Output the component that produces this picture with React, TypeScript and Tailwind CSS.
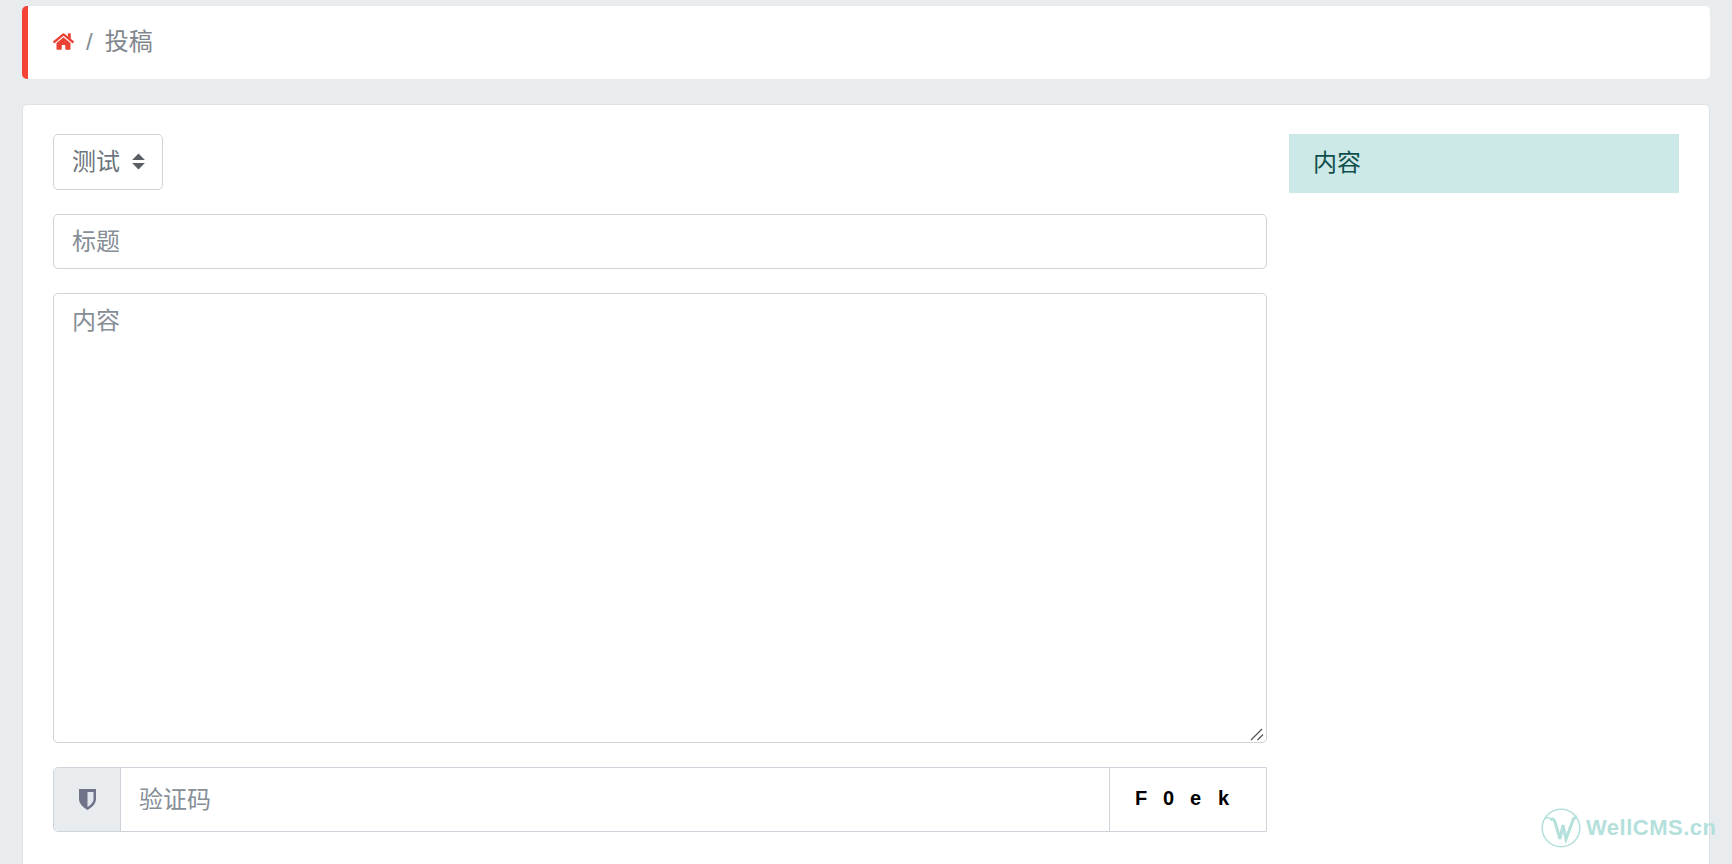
import React from "react";
import { FaHome } from "react-icons/fa";

const font = "font-['Liberation_Sans','Noto_Sans_CJK_SC',sans-serif]";

export default function App() {
  return (
    <div className={`${font} relative h-[864px] overflow-hidden bg-[#e9ecef] px-[22px] pt-[6px] text-[24px] leading-[36px] text-[#6c757d]`}>
      <nav className="flex h-[73px] items-center gap-[12px] rounded-[5px] border-l-[6px] border-[#f44336] bg-white pb-[2px] pl-[25px]">
        <FaHome className="h-[19px] w-[21px] text-[#ea4335]" />
        <span className="text-[#868e96]">/</span>
        <span className="text-[#7f868d]">投稿</span>
      </nav>

      <main className="mt-[25px] flex h-[800px] gap-[22px] rounded-[5px] border border-[#dee2e6] bg-white pl-[30px] pr-[30px] pt-[29px]">
        <form className="flex w-[1214px] flex-col gap-[24px]">
          <div className="relative w-[110px]">
            <select className="block h-[56px] w-full appearance-none rounded-[5px] border border-[#ced4da] bg-white pl-[18px] text-[#6c757d] outline-none">
              <option>测试</option>
            </select>
            <svg viewBox="0 0 12 16" className="pointer-events-none absolute left-[79px] top-[19px] h-[17px] w-[13px] fill-[#5a5f66]">
              <path d="M6 0.5 12 6.5H0Z" />
              <path d="M0 9.5H12L6 15.5Z" />
            </svg>
          </div>
          <input
            placeholder="标题"
            className="h-[55px] w-full rounded-[5px] border border-[#ced4da] bg-white px-[18px] outline-none placeholder:text-[#868e96]"
          />
          <div className="relative h-[450px] w-full">
            <textarea
              placeholder="内容"
              className="block h-full w-full resize-none rounded-[5px] border border-[#ced4da] bg-white px-[18px] py-[9px] outline-none placeholder:text-[#868e96]"
            />
            <svg viewBox="0 0 14 14" className="pointer-events-none absolute bottom-[2px] right-[3px] h-[14px] w-[14px] stroke-[#555] stroke-[1.3]">
              <path d="M1 13 12 2" />
              <path d="M7.5 13 13 7.5" />
            </svg>
          </div>
          <div className="flex h-[65px] w-full rounded-l-[5px] border border-[#ced4da]">
            <div className="flex w-[67px] items-center justify-center rounded-l-[4px] border-r border-[#ced4da] bg-[#e9ecef]">
              <svg viewBox="0 0 17 21" className="h-[21px] w-[17px]">
                <path d="M0 0H17V10C17 15 12.5 18.5 8.5 21 4.5 18.5 0 15 0 10Z" fill="#6f7288" />
                <path d="M8.5 3H14.5V10C14.5 13.5 11.5 16 8.5 18Z" fill="#e3e6ec" />
              </svg>
            </div>
            <input
              placeholder="验证码"
              className="min-w-0 flex-1 px-[18px] outline-none placeholder:text-[#868e96]"
            />
            <div className="flex w-[157px] items-center border-l border-[#ced4da] pb-[4px] pl-[25px] text-[20px] font-bold leading-none text-black">
              <span className="w-[28px]">F</span>
              <span className="w-[27px]">0</span>
              <span className="w-[28px]">e</span>
              <span>k</span>
            </div>
          </div>
        </form>

        <aside className="h-[59px] w-[390px] bg-[#cce9e7] px-[24px] py-[11px] text-[#0f4f4b]">内容</aside>
      </main>

      <div className="absolute left-[1541px] top-[808px] flex items-center gap-[5px]">
        <svg viewBox="0 0 40 40" className="h-[40px] w-[40px] fill-none stroke-[#b4e0dc] stroke-[1.5]">
          <circle cx="20" cy="20" r="18.8" />
          <path d="M9 12c2-2 4-1 5 2l5 17 3-14 3 14 7-19c1-2 2-3 4-3" strokeWidth="3" />
          <path d="M4 11c2-2 5-2 7 1" strokeWidth="1.5" />
        </svg>
        <span className="text-[22px] font-bold leading-none tracking-[0.5px] text-[#b4e0dc]">WellCMS.cn</span>
      </div>
    </div>
  );
}
